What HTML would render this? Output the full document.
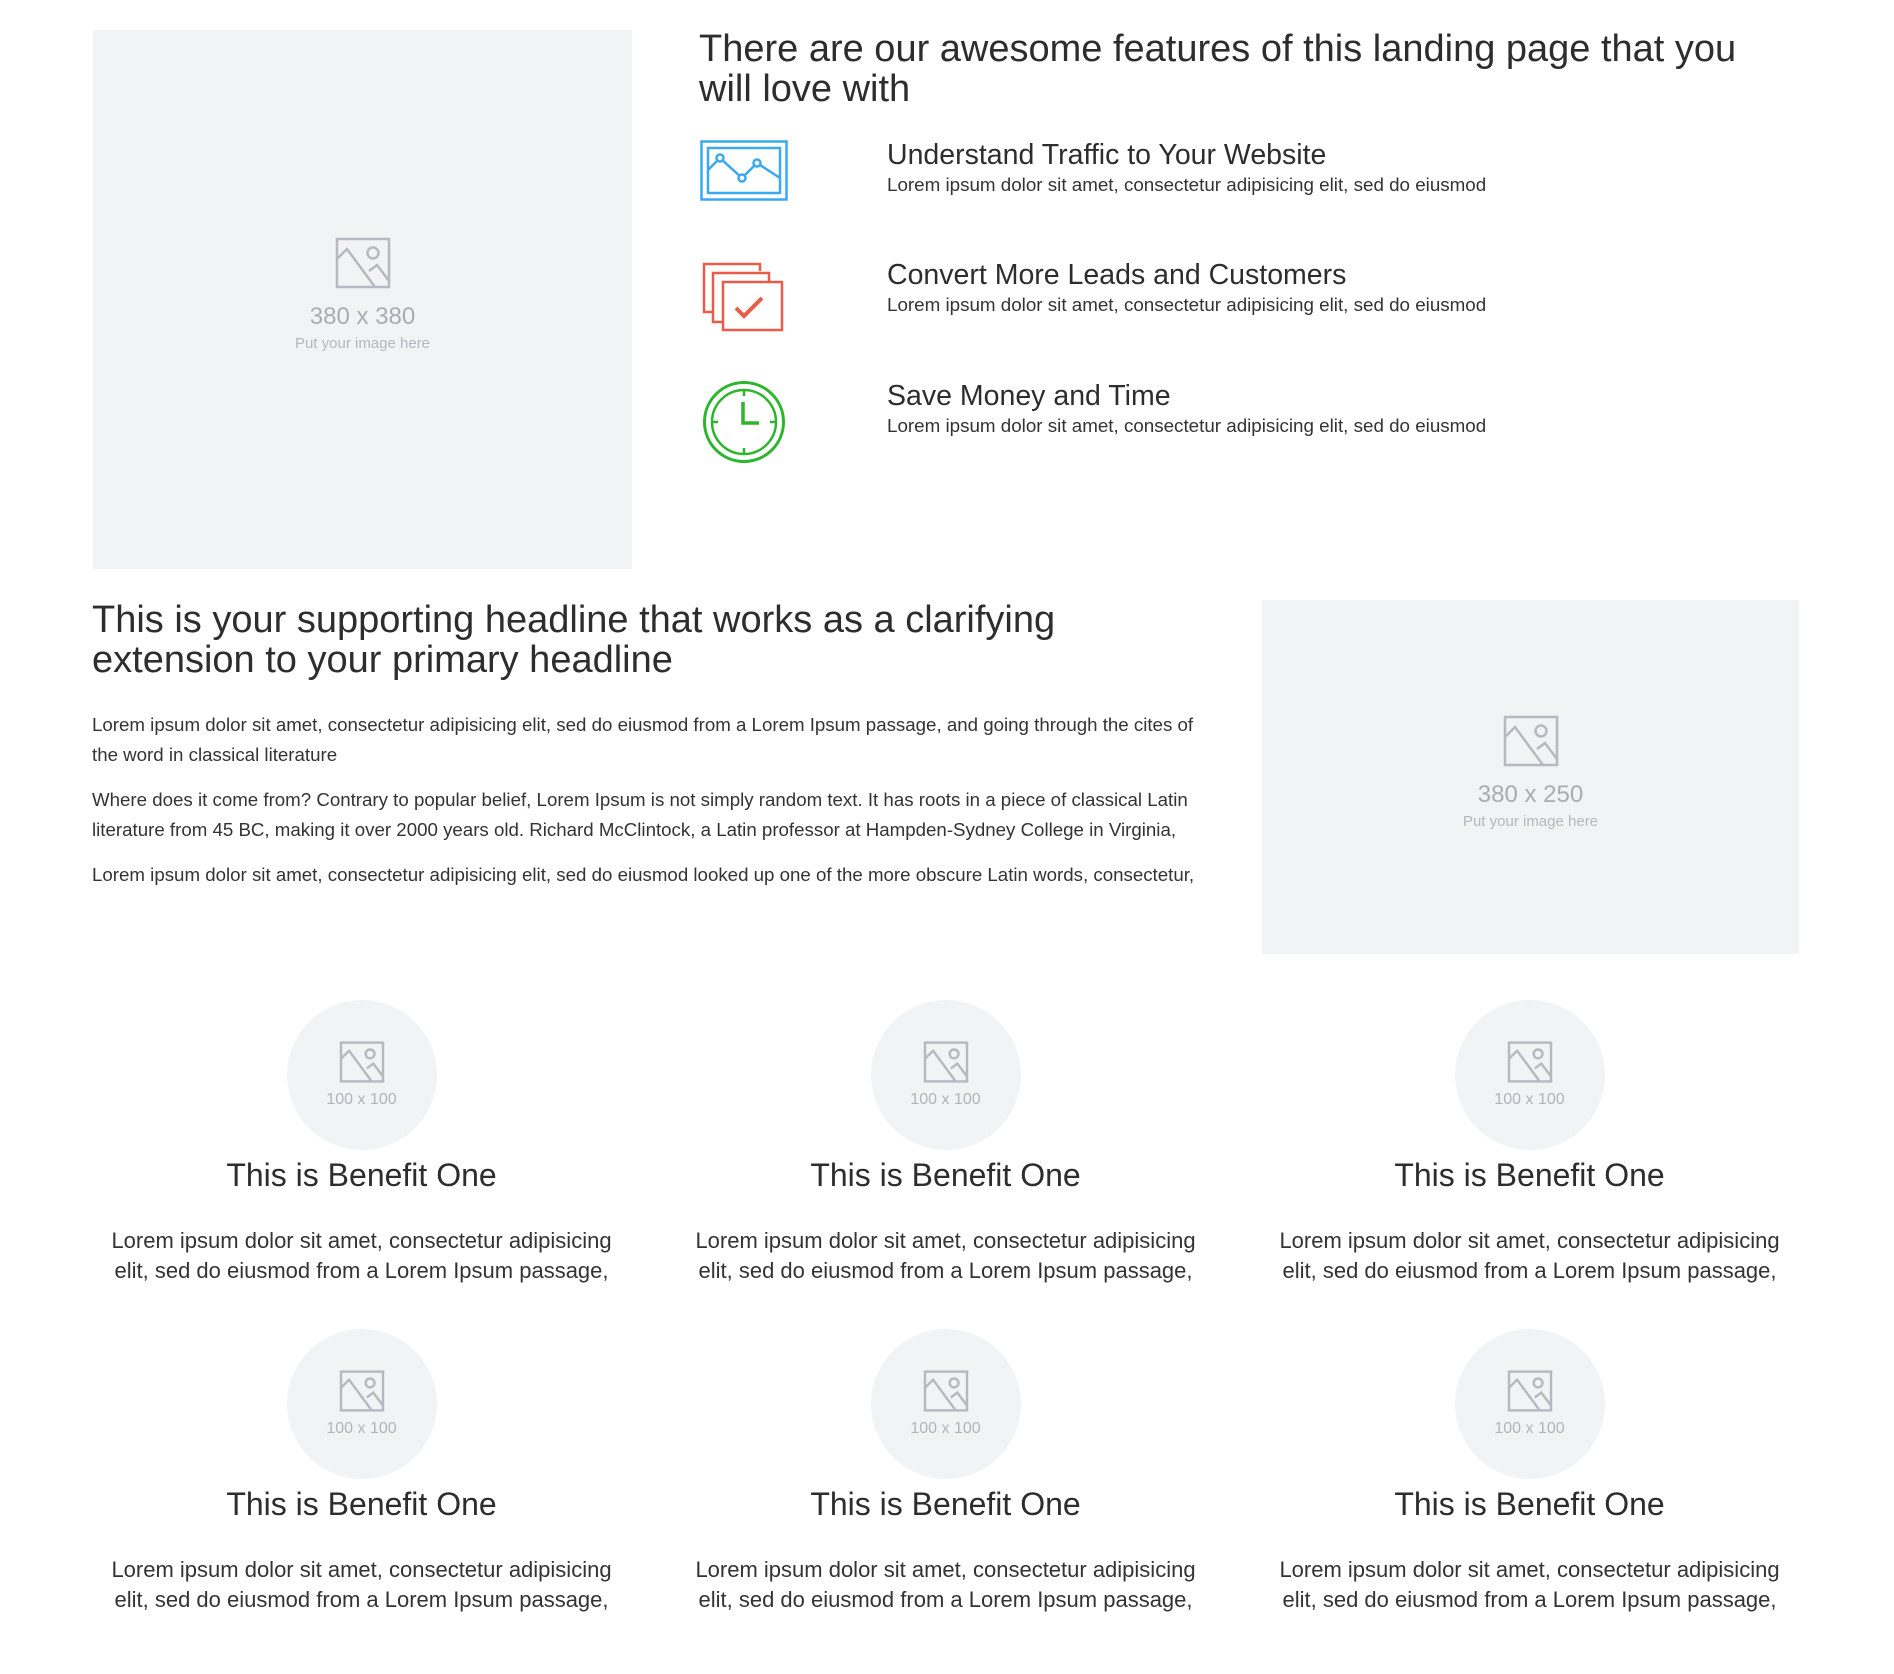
<!DOCTYPE html>
<html><head><meta charset="utf-8">
<style>
*{margin:0;padding:0;box-sizing:border-box}
body{width:1894px;height:1674px;background:#fff;font-family:"Liberation Sans",sans-serif;color:#333;position:relative;overflow:hidden}
.abs{position:absolute}
.ph{background:#f2f3f5;position:absolute;display:flex;flex-direction:column;align-items:center;justify-content:center;color:#a8adb5}
.h1{font-size:38px;line-height:40px;color:#2d2d2d}
.ft{font-size:28.5px;line-height:32px;color:#2d2d2d}
.fd{font-size:18.8px;line-height:24px;color:#333}
.p{font-size:18.7px;line-height:30px;color:#333}
.col{position:absolute;width:585px;text-align:center}
.circ{width:150px;height:150px;border-radius:50%;background:#f2f3f5;margin:0 auto;display:flex;flex-direction:column;align-items:center;justify-content:center;color:#b0b4bb;font-size:16px}
.bt{font-size:32px;line-height:40px;color:#2d2d2d;margin-top:5px}
.bd{font-size:22px;line-height:30px;color:#333;margin-top:31px;padding:0 30px}
</style></head><body>

<div class="ph" style="left:93px;top:30px;width:539px;height:539px">
<svg width="56" height="52" viewBox="0 0 56 52" style="margin-top:-10px"><rect x="2" y="2" width="52" height="48" fill="none" stroke="#b5bac2" stroke-width="2.5"/><circle cx="38" cy="16" r="5.5" fill="none" stroke="#b5bac2" stroke-width="2.5"/><path d="M2 22 L12 12 L40 50 M34 34 L42 28 L54 44" fill="none" stroke="#b5bac2" stroke-width="2.5"/></svg>
<div style="font-size:24px;margin-top:14px;color:#a8adb5">380 x 380</div>
<div style="font-size:15px;margin-top:4px;color:#b3b8bf">Put your image here</div>
</div>

<div class="abs h1" style="left:699px;top:29px;width:1090px">There are our awesome features of this landing page that you will love with</div>

<svg class="abs" style="left:700px;top:140px" width="88" height="62" viewBox="0 0 88 62"><rect x="1.5" y="1.5" width="85" height="58" fill="none" stroke="#3aa9f0" stroke-width="2.5"/><rect x="8" y="8" width="72" height="45" fill="none" stroke="#3aa9f0" stroke-width="2.5"/><path d="M8 30 L20 18 L42 38 L57 23 L80 38" fill="none" stroke="#3aa9f0" stroke-width="2.5"/><circle cx="20" cy="18" r="3.5" fill="#fff" stroke="#3aa9f0" stroke-width="2.5"/><circle cx="42" cy="38" r="3.5" fill="#fff" stroke="#3aa9f0" stroke-width="2.5"/><circle cx="57" cy="23" r="3.5" fill="#fff" stroke="#3aa9f0" stroke-width="2.5"/></svg>
<div class="abs ft" style="left:887px;top:139px">Understand Traffic to Your Website</div>
<div class="abs fd" style="left:887px;top:173px">Lorem ipsum dolor sit amet, consectetur adipisicing elit, sed do eiusmod</div>

<svg class="abs" style="left:702px;top:262px" width="82" height="70" viewBox="0 0 82 70"><path d="M10 50 H2 V2 H58 V9" fill="none" stroke="#e85c4a" stroke-width="2.5"/><path d="M20 60 H11 V11 H67 V19" fill="none" stroke="#e85c4a" stroke-width="2.5"/><rect x="21" y="20" width="59" height="48" fill="none" stroke="#e85c4a" stroke-width="2.5"/><path d="M34 46 L42 54 L60 36" fill="none" stroke="#e85c4a" stroke-width="4"/></svg>
<div class="abs ft" style="left:887px;top:259px">Convert More Leads and Customers</div>
<div class="abs fd" style="left:887px;top:293px">Lorem ipsum dolor sit amet, consectetur adipisicing elit, sed do eiusmod</div>

<svg class="abs" style="left:702px;top:380px" width="84" height="84" viewBox="0 0 84 84"><circle cx="42" cy="42" r="39.5" fill="none" stroke="#2db52d" stroke-width="3"/><circle cx="42" cy="42" r="32" fill="none" stroke="#2db52d" stroke-width="2.5"/><path d="M42 10 V16 M42 68 V74 M10 42 H16 M68 42 H74" stroke="#2db52d" stroke-width="2.5"/><path d="M41 22 V43 H57" fill="none" stroke="#2db52d" stroke-width="3.5"/></svg>
<div class="abs ft" style="left:887px;top:380px">Save Money and Time</div>
<div class="abs fd" style="left:887px;top:414px">Lorem ipsum dolor sit amet, consectetur adipisicing elit, sed do eiusmod</div>

<div class="abs h1" style="left:92px;top:600px;width:1180px">This is your supporting headline that works as a clarifying<br>extension to your primary headline</div>
<div class="abs p" style="left:92px;top:710px;width:1112px">Lorem ipsum dolor sit amet, consectetur adipisicing elit, sed do eiusmod from a Lorem Ipsum passage, and going through the cites of the word in classical literature</div>
<div class="abs p" style="left:92px;top:785px;width:1135px">Where does it come from? Contrary to popular belief, Lorem Ipsum is not simply random text. It has roots in a piece of classical Latin literature from 45 BC, making it over 2000 years old. Richard McClintock, a Latin professor at Hampden-Sydney College in Virginia,</div>
<div class="abs p" style="left:92px;top:860px;width:1150px;white-space:nowrap">Lorem ipsum dolor sit amet, consectetur adipisicing elit, sed do eiusmod looked up one of the more obscure Latin words, consectetur,</div>

<div class="ph" style="left:1262px;top:600px;width:537px;height:354px">
<svg width="56" height="52" viewBox="0 0 56 52" style="margin-top:-10px"><rect x="2" y="2" width="52" height="48" fill="none" stroke="#b5bac2" stroke-width="2.5"/><circle cx="38" cy="16" r="5.5" fill="none" stroke="#b5bac2" stroke-width="2.5"/><path d="M2 22 L12 12 L40 50 M34 34 L42 28 L54 44" fill="none" stroke="#b5bac2" stroke-width="2.5"/></svg>
<div style="font-size:24px;margin-top:14px;color:#a8adb5">380 x 250</div>
<div style="font-size:15px;margin-top:4px;color:#b3b8bf">Put your image here</div>
</div>

<!-- benefits -->
<div class="col" style="left:69px;top:1000px">
<div class="circ"><svg width="46" height="42" viewBox="0 0 56 52"><rect x="2" y="2" width="52" height="48" fill="none" stroke="#b5bac2" stroke-width="3"/><circle cx="38" cy="16" r="5.5" fill="none" stroke="#b5bac2" stroke-width="3"/><path d="M2 22 L12 12 L40 50 M34 34 L42 28 L54 44" fill="none" stroke="#b5bac2" stroke-width="3"/></svg><div style="margin-top:8px">100 x 100</div></div>
<div class="bt">This is Benefit One</div>
<div class="bd">Lorem ipsum dolor sit amet, consectetur adipisicing elit, sed do eiusmod from a Lorem Ipsum passage,</div></div>
<div class="col" style="left:653px;top:1000px">
<div class="circ"><svg width="46" height="42" viewBox="0 0 56 52"><rect x="2" y="2" width="52" height="48" fill="none" stroke="#b5bac2" stroke-width="3"/><circle cx="38" cy="16" r="5.5" fill="none" stroke="#b5bac2" stroke-width="3"/><path d="M2 22 L12 12 L40 50 M34 34 L42 28 L54 44" fill="none" stroke="#b5bac2" stroke-width="3"/></svg><div style="margin-top:8px">100 x 100</div></div>
<div class="bt">This is Benefit One</div>
<div class="bd">Lorem ipsum dolor sit amet, consectetur adipisicing elit, sed do eiusmod from a Lorem Ipsum passage,</div></div>
<div class="col" style="left:1237px;top:1000px">
<div class="circ"><svg width="46" height="42" viewBox="0 0 56 52"><rect x="2" y="2" width="52" height="48" fill="none" stroke="#b5bac2" stroke-width="3"/><circle cx="38" cy="16" r="5.5" fill="none" stroke="#b5bac2" stroke-width="3"/><path d="M2 22 L12 12 L40 50 M34 34 L42 28 L54 44" fill="none" stroke="#b5bac2" stroke-width="3"/></svg><div style="margin-top:8px">100 x 100</div></div>
<div class="bt">This is Benefit One</div>
<div class="bd">Lorem ipsum dolor sit amet, consectetur adipisicing elit, sed do eiusmod from a Lorem Ipsum passage,</div></div>

<div class="col" style="left:69px;top:1329px">
<div class="circ"><svg width="46" height="42" viewBox="0 0 56 52"><rect x="2" y="2" width="52" height="48" fill="none" stroke="#b5bac2" stroke-width="3"/><circle cx="38" cy="16" r="5.5" fill="none" stroke="#b5bac2" stroke-width="3"/><path d="M2 22 L12 12 L40 50 M34 34 L42 28 L54 44" fill="none" stroke="#b5bac2" stroke-width="3"/></svg><div style="margin-top:8px">100 x 100</div></div>
<div class="bt">This is Benefit One</div>
<div class="bd">Lorem ipsum dolor sit amet, consectetur adipisicing elit, sed do eiusmod from a Lorem Ipsum passage,</div></div>
<div class="col" style="left:653px;top:1329px">
<div class="circ"><svg width="46" height="42" viewBox="0 0 56 52"><rect x="2" y="2" width="52" height="48" fill="none" stroke="#b5bac2" stroke-width="3"/><circle cx="38" cy="16" r="5.5" fill="none" stroke="#b5bac2" stroke-width="3"/><path d="M2 22 L12 12 L40 50 M34 34 L42 28 L54 44" fill="none" stroke="#b5bac2" stroke-width="3"/></svg><div style="margin-top:8px">100 x 100</div></div>
<div class="bt">This is Benefit One</div>
<div class="bd">Lorem ipsum dolor sit amet, consectetur adipisicing elit, sed do eiusmod from a Lorem Ipsum passage,</div></div>
<div class="col" style="left:1237px;top:1329px">
<div class="circ"><svg width="46" height="42" viewBox="0 0 56 52"><rect x="2" y="2" width="52" height="48" fill="none" stroke="#b5bac2" stroke-width="3"/><circle cx="38" cy="16" r="5.5" fill="none" stroke="#b5bac2" stroke-width="3"/><path d="M2 22 L12 12 L40 50 M34 34 L42 28 L54 44" fill="none" stroke="#b5bac2" stroke-width="3"/></svg><div style="margin-top:8px">100 x 100</div></div>
<div class="bt">This is Benefit One</div>
<div class="bd">Lorem ipsum dolor sit amet, consectetur adipisicing elit, sed do eiusmod from a Lorem Ipsum passage,</div></div>

</body></html>
